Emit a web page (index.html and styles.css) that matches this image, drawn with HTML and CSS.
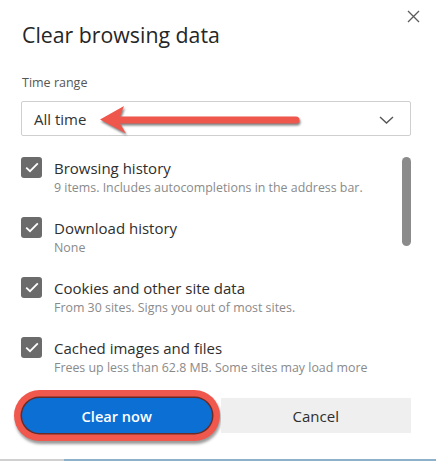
FILE: index.html
```html
<!DOCTYPE html>
<html lang="en">
<head>
<meta charset="utf-8">
<title>Clear browsing data</title>
<link rel="stylesheet" href="styles.css">
</head>
<body>
<div class="dialog">
  <div class="header">
    <h1 class="title">Clear browsing data</h1>
    <button class="close" aria-label="Close">
      <svg width="13" height="13" viewBox="0 0 13 13"><path d="M1 1 L12 12 M12 1 L1 12" stroke="#5a5a5a" stroke-width="1.3" fill="none"/></svg>
    </button>
  </div>
  <div class="field-label">Time range</div>
  <div class="select">
    <span class="select-value">All time</span>
    <svg class="chevron" width="15" height="8" viewBox="0 0 15 8"><path d="M1 1 L7.5 7 L14 1" stroke="#555" stroke-width="1.4" fill="none"/></svg>
    <svg class="arrow" width="212" height="36" viewBox="0 0 212 36"><path d="M5 16.5 L29 3 L25 13.5 L201 13.5 A3.5 3.5 0 0 1 201 20.5 L25 20.5 L31 30.5 Z" fill="#f0574c"/></svg>
  </div>
  <div class="list">
    <div class="items">
      <div class="item">
        <span class="check"><svg width="14" height="11" viewBox="0 0 14 11"><path d="M1.2 5.6 L5 9.2 L12.8 1.4" stroke="#fff" stroke-width="1.8" fill="none"/></svg></span>
        <div class="item-text">
          <div class="item-label">Browsing history</div>
          <div class="item-sub">9 items. Includes autocompletions in the address bar.</div>
        </div>
      </div>
      <div class="item">
        <span class="check"><svg width="14" height="11" viewBox="0 0 14 11"><path d="M1.2 5.6 L5 9.2 L12.8 1.4" stroke="#fff" stroke-width="1.8" fill="none"/></svg></span>
        <div class="item-text">
          <div class="item-label">Download history</div>
          <div class="item-sub">None</div>
        </div>
      </div>
      <div class="item">
        <span class="check"><svg width="14" height="11" viewBox="0 0 14 11"><path d="M1.2 5.6 L5 9.2 L12.8 1.4" stroke="#fff" stroke-width="1.8" fill="none"/></svg></span>
        <div class="item-text">
          <div class="item-label">Cookies and other site data</div>
          <div class="item-sub">From 30 sites. Signs you out of most sites.</div>
        </div>
      </div>
      <div class="item">
        <span class="check"><svg width="14" height="11" viewBox="0 0 14 11"><path d="M1.2 5.6 L5 9.2 L12.8 1.4" stroke="#fff" stroke-width="1.8" fill="none"/></svg></span>
        <div class="item-text">
          <div class="item-label">Cached images and files</div>
          <div class="item-sub">Frees up less than 62.8 MB. Some sites may load more</div>
        </div>
      </div>
    </div>
    <div class="scrollbar"></div>
  </div>
  <div class="buttons">
    <button class="btn btn-primary">Clear now</button>
    <button class="btn btn-secondary">Cancel</button>
  </div>
</div>
<div class="bottom-edge"></div>
</body>
</html>
```

FILE: styles.css
```css
html, body {
  margin: 0;
  padding: 0;
  background: #fff;
}
body {
  width: 436px;
  height: 461px;
  overflow: hidden;
  font-family: "Open Sans", "Noto Sans", sans-serif;
  color: #2b2b2b;
}
.dialog {
  padding: 21px 25px 0 21px;
}
.header {
  display: flex;
  justify-content: space-between;
  align-items: flex-start;
}
.title {
  margin: 0 0 0 1px;
  font-size: 21.3px;
  line-height: 28px;
  font-weight: 400;
  color: #262626;
}
.close {
  margin: -11px -9px 0 0;
  padding: 0;
  border: 0;
  background: none;
  width: 13px;
  height: 13px;
  display: block;
}
.close svg { display: block; }
.field-label {
  margin-top: 25px;
  margin-left: 1px;
  font-size: 12.5px;
  line-height: 18px;
  color: #555;
}
.select {
  position: relative;
  margin-top: 9px;
  height: 33px;
  border: 1px solid #cfcfcf;
  border-radius: 2px;
  display: flex;
  align-items: center;
  justify-content: space-between;
  padding: 0 16px 0 12px;
}
.select-value {
  font-size: 15px;
  line-height: 20px;
  color: #333;
}
.chevron { display: block; margin-top: 2px; }
.arrow {
  position: absolute;
  left: 73px;
  top: 1px;
  filter: drop-shadow(1px 2px 1px rgba(0,0,0,0.5));
}
.list {
  margin-top: 21px;
  display: flex;
  justify-content: space-between;
  align-items: flex-start;
}
.items {
  display: flex;
  flex-direction: column;
  gap: 21px;
}
.item {
  display: flex;
  gap: 12px;
  align-items: flex-start;
}
.check {
  width: 21px;
  height: 21px;
  border-radius: 3px;
  background: #6b6b6b;
  display: flex;
  align-items: center;
  justify-content: center;
  flex: none;
}
.check svg { display: block; }
.item-label {
  font-size: 15px;
  line-height: 23px;
  color: #2e2e2e;
}
.item-sub {
  font-size: 12.4px;
  line-height: 16px;
  color: #8a8a8a;
}
.scrollbar {
  width: 9px;
  height: 89px;
  border-radius: 5px;
  background: #8b8b8b;
}
.buttons {
  margin-top: 22px;
  display: grid;
  grid-template-columns: 1fr 1fr;
  gap: 9px;
}
.btn {
  height: 35px;
  border: 0;
  font-family: inherit;
  font-size: 15px;
  padding: 0;
}
.btn-primary {
  margin-left: 1px;
  background: #0b6fd4;
  color: #fff;
  font-size: 14.6px;
  font-weight: 600;
  border-radius: 18px;
  box-shadow: 0 0 0 1.5px #6a2c28, 0 0 0 8px #f0584d, 1px 3px 3px 8px rgba(0,0,0,0.4);
}
.btn-secondary {
  background: #efefef;
  color: #2e2e2e;
}
.bottom-edge {
  margin-top: 26px;
  height: 2px;
  background: linear-gradient(to right, #d0d0d0 0, #d0d0d0 64px, #8eb1ca 64px);
}
```
